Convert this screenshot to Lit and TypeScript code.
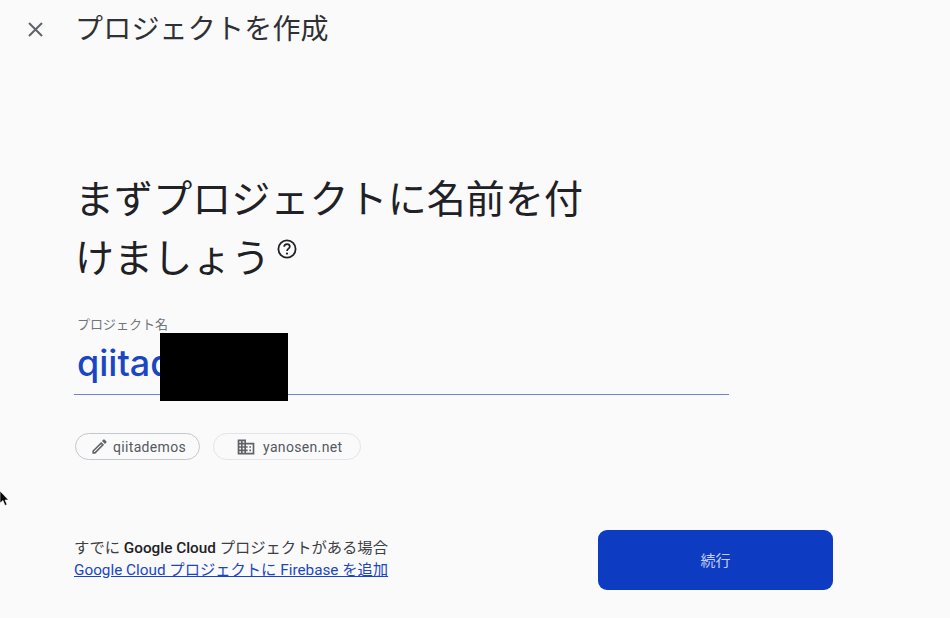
import { LitElement, html, css } from "lit";
import { customElement } from "lit/decorators.js";

@customElement("app-root")
export class AppRoot extends LitElement {
  static styles = css`
    :host {
      display: block;
      position: relative;
      width: 950px;
      height: 618px;
      overflow: hidden;
      background: #fafafb;
      font-family: Roboto, "Noto Sans CJK JP", sans-serif;
      color: #202124;
    }
    .topbar {
      display: flex;
      align-items: center;
      height: 58px;
      padding-left: 26px;
      gap: 30px;
    }
    .close { width: 19px; height: 19px; flex: none; }
    .title { font-size: 28px; font-weight: 400; line-height: 56px; margin: 2px 0 0; letter-spacing: 0.2px; color: #303134; }
    .main {
      padding: 113px 0 0 75px;
    }
    .heading {
      margin: 0;
      width: 520px;
      font-size: 39px;
      line-height: 59px;
      font-weight: 400;
      letter-spacing: 0.08px;
      color: #202124;
    }
    .help { width: 22px; height: 22px; vertical-align: 12px; margin-left: 6px; }
    .field {
      position: relative;
      margin: 28px 0 0 -1px;
      width: 655px;
      height: 77px;
      border-bottom: 1px solid #7384cf;
    }
    .label {
      font-size: 13px;
      line-height: 16px;
      color: #70757a;
      padding-left: 3px;
    }
    .value {
      font-family: Inter, Roboto, sans-serif;
      font-size: 36px;
      font-weight: 500;
      line-height: 46px;
      margin-top: 7px;
      color: #1a46c4;
      padding-left: 3px;
    }
    .redact {
      position: absolute;
      left: 86px;
      top: 16px;
      width: 128px;
      height: 68px;
      background: #000;
    }
    .chips {
      display: flex;
      gap: 13px;
      margin: 38px 0 0 0;
    }
    .chip {
      display: flex;
      align-items: center;
      height: 25px;
      border-radius: 14px;
      font-size: 14px;
      font-weight: 400;
      letter-spacing: 0.33px;
      color: #55595e;
    }
    .chip.a { border: 1px solid #c4c7cc; padding: 0 13px 0 14px; gap: 4px; }
    .chip.b { border: 1px solid #e3e4e7; padding: 0 18px 0 22px; gap: 7px; }
    .chip svg { flex: none; }
    .footer {
      display: flex;
      justify-content: space-between;
      align-items: flex-start;
      width: 758px;
      margin: 70px 0 0 0;
    }
    .note { font-size: 15.3px; line-height: 22px; padding-top: 7px; margin-left: -1px; color: #3c4043; }
    .note b { font-weight: 500; color: #202124; }
    .note a { color: #1a46c4; text-decoration: underline; display: block; }
    .btn {
      width: 235px;
      height: 60px;
      background: #0d3cc3;
      border: none;
      border-radius: 9px;
      color: #c5cff0;
      font: inherit;
      font-size: 15px;
      padding: 0 0 2px;
    }
    .cursor { position: absolute; left: -1px; top: 490px; width: 9px; height: 18px; }
  `;

  render() {
    return html`
      <div class="topbar">
        <svg class="close" viewBox="0 0 19 19">
          <path d="M3 3L16 16M16 3L3 16" stroke="#5f6368" stroke-width="2" fill="none" />
        </svg>
        <h1 class="title">プロジェクトを作成</h1>
      </div>
      <div class="main">
        <h2 class="heading">まずプロジェクトに名前を付けましょう<svg class="help" viewBox="0 0 22 22">
            <circle cx="11" cy="11" r="8.6" fill="none" stroke="#202124" stroke-width="1.8" />
            <path d="M8.2 8.8c0-1.6 1.2-2.7 2.8-2.7s2.8 1 2.8 2.5c0 2-2.8 2.2-2.8 4.4" fill="none" stroke="#202124" stroke-width="1.7" />
            <circle cx="11" cy="15.6" r="1.1" fill="#202124" />
          </svg></h2>
        <div class="field">
          <div class="label">プロジェクト名</div>
          <div class="value">qiitademos</div>
          <div class="redact"></div>
        </div>
        <div class="chips">
          <div class="chip a">
            <svg width="19" height="19" viewBox="0 0 24 24" fill="#5f6368">
              <path d="M14.06 9.02l.92.92L5.92 19H5v-.92l9.06-9.06M17.66 3c-.25 0-.51.1-.7.29l-1.83 1.83 3.75 3.75 1.83-1.83c.39-.39.39-1.02 0-1.41l-2.34-2.34c-.2-.2-.45-.29-.71-.29zm-3.6 3.19L3 17.25V21h3.75L17.81 9.94l-3.75-3.75z" />
            </svg>
            qiitademos
          </div>
          <div class="chip b">
            <svg width="20" height="20" viewBox="0 0 24 24" fill="#5f6368">
              <path d="M12 7V3H2v18h20V7H12zM6 19H4v-2h2v2zm0-4H4v-2h2v2zm0-4H4V9h2v2zm0-4H4V5h2v2zm4 12H8v-2h2v2zm0-4H8v-2h2v2zm0-4H8V9h2v2zm0-4H8V5h2v2zm10 12h-8v-2h2v-2h-2v-2h2v-2h-2V9h8v10zm-2-8h-2v2h2v-2zm0 4h-2v2h2v-2z" />
            </svg>
            yanosen.net
          </div>
        </div>
        <div class="footer">
          <div class="note">
            すでに <b>Google Cloud</b> プロジェクトがある場合
            <a href="#">Google Cloud プロジェクトに Firebase を追加</a>
          </div>
          <button class="btn">続行</button>
        </div>
      </div>
      <svg class="cursor" viewBox="0 0 9 18">
        <path d="M1 1v12l3-2.5 2 5 2-1-2-4.5h3.5z" fill="#000" stroke="#fff" stroke-width="0.6" />
      </svg>
    `;
  }
}
